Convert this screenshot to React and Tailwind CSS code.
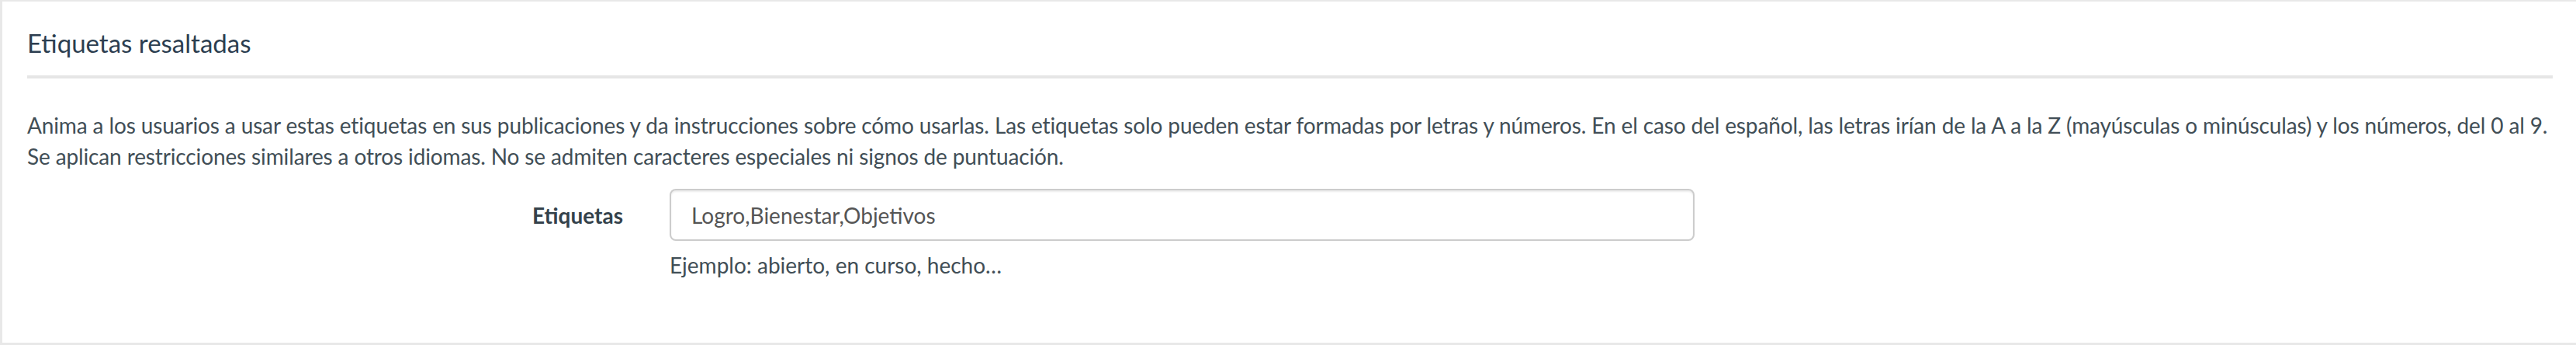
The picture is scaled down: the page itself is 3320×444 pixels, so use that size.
export default function App() {
  return (
    <div className="w-[3320px] h-[444px] bg-white overflow-hidden" style={{ fontFamily: "Lato, 'Noto Sans', sans-serif" }}>
      <div className="h-[444px] border-l-[3px] border-t-2 border-b-[3px] border-[#e8e8e8] pl-[32px] pr-[30px]">
        <h2 className="pt-[33px] text-[33px] leading-[40px] text-[#2c3e50] font-normal">Etiquetas resaltadas</h2>
        <div className="mt-[22px] h-[4px] bg-[#e6e6e6]" />

        <p className="mt-[40px] text-[28px] leading-[40px] tracking-[-0.13px] text-[#414e56] whitespace-nowrap">
          Anima a los usuarios a usar estas etiquetas en sus publicaciones y da instrucciones sobre cómo usarlas. Las etiquetas solo pueden estar formadas por letras y números. En el caso del español, las letras irían de la A a la Z (mayúsculas o minúsculas) y los números, del 0 al 9.
          <br />
          Se aplican restricciones similares a otros idiomas. No se admiten caracteres especiales ni signos de puntuación.
        </p>

        <div className="mt-[22px] flex items-start">
          <label className="w-[768px] pt-[14px] text-right text-[28px] leading-[40px] font-bold text-[#34424b]">
            Etiquetas
          </label>
          <div className="ml-[60px] flex flex-col">
            <input
              readOnly
              value="Logro,Bienestar,Objetivos"
              className="w-[1321px] h-[67px] px-[26px] rounded-[8px] border-2 border-[#cccccc] text-[28px] text-[#555555] outline-none shadow-[inset_0_2px_2px_rgba(0,0,0,0.075)]"
              style={{ fontFamily: "Lato, 'Noto Sans', sans-serif" }}
            />
            <span className="mt-[11px] text-[28px] leading-[40px] text-[#414e56]">Ejemplo: abierto, en curso, hecho…</span>
          </div>
        </div>
      </div>
    </div>
  )
}
